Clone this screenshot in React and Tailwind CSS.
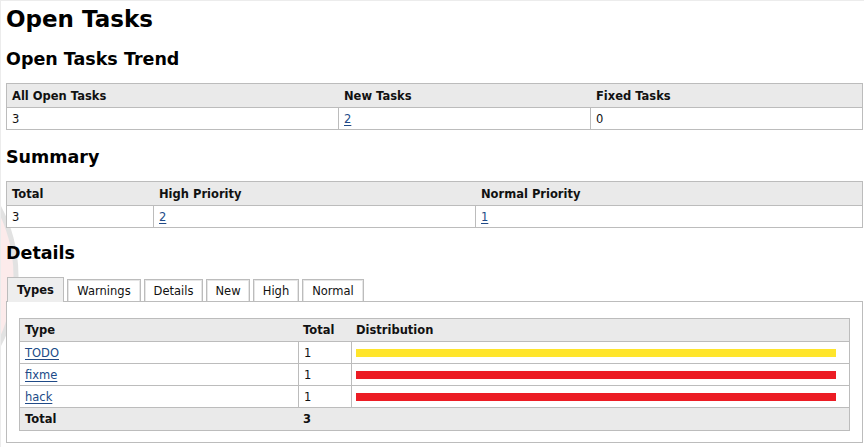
import React from "react";

const B = "border-[#bcbcbc]";

function Link({ children }) {
  return <a href="#" className="text-[#204a87] underline underline-offset-[2px]">{children}</a>;
}

function SimpleTable({ cols, headers, values }) {
  return (
    <div className={`border ${B} bg-white`}>
      <div className="grid h-[23px] items-center bg-[#eaeaea] pt-[2px] font-bold" style={{ gridTemplateColumns: cols }}>
        {headers.map((h, i) => (
          <div key={i} className={i > 0 ? "pl-[6px]" : "pl-[5px]"}>{h}</div>
        ))}
      </div>
      <div className={`grid h-[22px] border-t ${B}`} style={{ gridTemplateColumns: cols }}>
        {values.map((v, i) => (
          <div key={i} className={`flex items-center pt-[2px] pl-[5px] ${i > 0 ? `border-l ${B}` : ""}`}>{v}</div>
        ))}
      </div>
    </div>
  );
}

const tabs = [
  { label: "Types", w: "w-[57px]", active: true },
  { label: "Warnings", w: "w-[74px]" },
  { label: "Details", w: "w-[59px]" },
  { label: "New", w: "w-[44px]" },
  { label: "High", w: "w-[46px]" },
  { label: "Normal", w: "w-[62px]" },
];

const rows = [
  { name: "TODO", total: "1", color: "bg-[#ffe52b]" },
  { name: "fixme", total: "1", color: "bg-[#ec1c24]" },
  { name: "hack", total: "1", color: "bg-[#ec1c24]" },
];

const innerCols = "278px 53px 1fr";

export default function App() {
  return (
    <div className="relative h-[447px] w-[864px] overflow-hidden bg-white border-t border-l border-[#ececec] font-['DejaVu_Sans',Verdana,sans-serif] text-[11.5px] text-[#111]">
      <svg className="absolute left-0 top-[120px]" width="40" height="320" viewBox="0 120 40 320">
        <circle cx="-131" cy="275" r="146" fill="#fcebeb" stroke="#e2e2e2" strokeWidth="5" />
      </svg>
      <div className="relative pl-[5px] pr-[1px]">
        <h1 className="mt-[4px] text-[23px] font-bold leading-[28px] text-black">Open Tasks</h1>
        <h2 className="mt-[15px] text-[17.5px] font-bold leading-[22px] text-black">Open Tasks Trend</h2>
        <div className="mt-[13px]">
          <SimpleTable
            cols="331px 252px 1fr"
            headers={["All Open Tasks", "New Tasks", "Fixed Tasks"]}
            values={["3", <Link>2</Link>, "0"]}
          />
        </div>
        <h2 className="mt-[16px] text-[17.5px] font-bold leading-[22px] text-black">Summary</h2>
        <div className="mt-[13px]">
          <SimpleTable
            cols="146px 322px 1fr"
            headers={["Total", "High Priority", "Normal Priority"]}
            values={["3", <Link>2</Link>, <Link>1</Link>]}
          />
        </div>
        <h2 className="mt-[14px] text-[17.5px] font-bold leading-[22px] text-black">Details</h2>
        <div className="mt-[13px] flex items-end gap-[3px] pl-[1px]">
          {tabs.map((t) =>
            t.active ? (
              <div
                key={t.label}
                className={`relative z-10 -mb-px flex h-[25px] ${t.w} items-center justify-center border border-b-0 ${B} bg-[#eeeeee] pt-[2px] font-bold`}
              >
                {t.label}
              </div>
            ) : (
              <div
                key={t.label}
                className={`flex h-[22px] ${t.w} items-center justify-center border border-b-0 ${B} bg-white pt-[2px] shadow-[inset_1px_1px_0_#e6e6e6,inset_-1px_0_0_#e6e6e6]`}
              >
                {t.label}
              </div>
            )
          )}
        </div>
        <div className={`border ${B} bg-white px-[12px] pt-[16px] pb-[11px]`}>
          <div className={`border ${B}`}>
            <div className="grid h-[22px] items-center bg-[#eaeaea] pt-[2px] font-bold" style={{ gridTemplateColumns: innerCols }}>
              <div className="pl-[5px]">Type</div>
              <div className="pl-[5px]">Total</div>
              <div className="pl-[5px]">Distribution</div>
            </div>
            {rows.map((r) => (
              <div key={r.name} className={`grid h-[22px] border-t ${B}`} style={{ gridTemplateColumns: innerCols }}>
                <div className="flex items-center pt-[2px] pl-[5px]">
                  <Link>{r.name}</Link>
                </div>
                <div className={`flex items-center border-l ${B} pt-[2px] pl-[5px]`}>{r.total}</div>
                <div className={`flex items-center border-l ${B} pl-[4px]`}>
                  <div className={`h-[8px] w-[480px] ${r.color}`} />
                </div>
              </div>
            ))}
            <div className={`grid h-[23px] items-center border-t ${B} bg-[#eaeaea] pt-[2px] font-bold`} style={{ gridTemplateColumns: innerCols }}>
              <div className="pl-[5px]">Total</div>
              <div className="pl-[5px]">3</div>
              <div />
            </div>
          </div>
        </div>
      </div>
    </div>
  );
}
